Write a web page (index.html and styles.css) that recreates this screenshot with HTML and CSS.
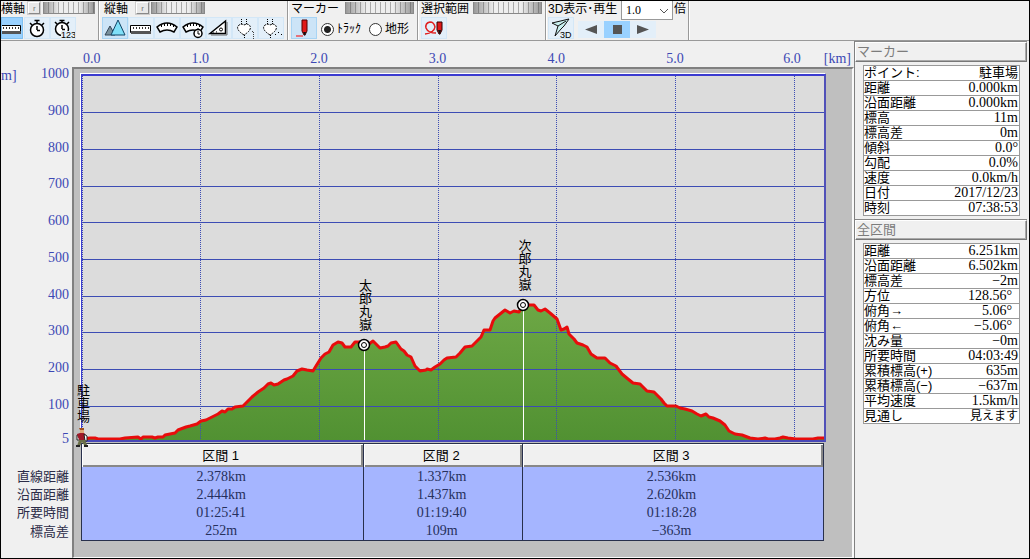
FILE: index.html
```html
<!DOCTYPE html>
<html lang="ja">
<head>
<meta charset="utf-8">
<title>断面図</title>
<link rel="stylesheet" href="styles.css">
</head>
<body>
<header class="toolbar">
  <section class="group group-x">
    <div class="group-head"><span>横軸</span><button class="reset" aria-label="横軸リセット">r</button><span class="dial"></span></div>
    <div class="tools">
      <button class="tool active" aria-label="距離"><svg width="20" height="22" viewBox="3 0 20 22"><path d="M1 7.500h20.500v7H1z" fill="#fff" stroke="#000"/><path d="M2 13h20v3H2z" fill="#555"/><path d="M4.500 9v2M7.500 9v2M10.500 9v2M13.500 9v2M16.500 9v2M19.500 9v2" stroke="#333"/></svg></button>
      <button class="tool" aria-label="時間"><svg width="24" height="22" viewBox="0 0 24 22"><circle cx="12" cy="12" r="6.500" fill="#fff" stroke="#000" stroke-width="1.500"/><path d="M12 5V3M9.500 2.500h5M12 12V8M12 12.500h3M5 5l2 2M19 5l-2 2" stroke="#000" fill="none" stroke-width="1.500"/></svg></button>
      <button class="tool" aria-label="時刻"><svg width="24" height="22" viewBox="0 0 24 22"><circle cx="11" cy="11" r="6.500" fill="#fff" stroke="#000" stroke-width="1.500"/><path d="M11 4V2M8.500 2.500h5M11 11V7M11 11.500h3M4 4l2 2M18 4l-2 2" stroke="#000" fill="none" stroke-width="1.500"/><path d="M10 13h14v9H10z" fill="#e3eff9"/><text class="icon-text" x="10" y="20">123</text></svg></button>
    </div>
  </section>
  <section class="group group-y">
    <div class="group-head"><span>縦軸</span><button class="reset" aria-label="縦軸リセット">r</button><span class="dial"></span></div>
    <div class="tools">
      <button class="tool on" aria-label="標高"><svg width="24" height="22" viewBox="0 0 24 22"><path d="M2 17L7 8l5 9z" fill="#78909c" stroke="#345"/><path d="M8 17L15 2l7 15z" fill="#80e0f8" stroke="#146"/></svg></button>
      <button class="tool" aria-label="沿面距離"><svg width="24" height="22" viewBox="0 0 24 22"><path d="M1.500 7.500h20v7h-20z" fill="#fff" stroke="#000"/><path d="M2 13h20v3H2z" fill="#555"/><path d="M4.500 9v2M7.500 9v2M10.500 9v2M13.500 9v2M16.500 9v2M19.500 9v2" stroke="#333"/></svg></button>
      <button class="tool" aria-label="速度"><svg width="24" height="22" viewBox="0 0 24 22"><path d="M2 9q10-8 20 0l-3 5q-7-4-14 0z" fill="#fff" stroke="#000" stroke-width="1.500"/><path d="M6.500 7v2M9.500 6v2M12.500 5v3M15.500 6v2M18.500 7v2" stroke="#000"/></svg></button>
      <button class="tool" aria-label="平均速度"><svg width="24" height="22" viewBox="0 0 24 22"><path d="M2 9q10-8 20 0l-3 5q-7-4-14 0z" fill="#fff" stroke="#000" stroke-width="1.500"/><path d="M6.500 7v2M9.500 6v2M12.500 5v3M15.500 6v2M18.500 7v2" stroke="#000"/><circle cx="17" cy="15.500" r="4" fill="#fff" stroke="#000" stroke-width="1.500"/><path d="M17 10v2M17 13v3h2" stroke="#000" fill="none"/></svg></button>
      <button class="tool" aria-label="傾斜"><svg width="24" height="22" viewBox="0 0 24 22"><path d="M3 15.500L18.500 3v12.500z" fill="#fff" stroke="#000" stroke-width="1.500"/><circle cx="14" cy="11.500" r="1.500" fill="none" stroke="#000"/><path d="M6.500 15v-2M9.500 15v-2M20 4v13H4" fill="none" stroke="#666"/></svg></button>
      <button class="tool" aria-label="センサー1"><svg width="24" height="22" viewBox="0 0 24 22"><path d="M11 17Q3 12 5 8q3-3 6-1 4-2 6 1 2 4-6 9z" fill="#fff" stroke="#000" stroke-dasharray="2 1"/><path d="M8.500 6V1M13.500 6V1M11.500 17v3" stroke="#000" stroke-dasharray="1 1"/><path d="M19 13.500h1.500V21" stroke="#444" fill="none" stroke-dasharray="1 1"/></svg></button>
      <button class="tool" aria-label="センサー2"><svg width="24" height="22" viewBox="0 0 24 22"><path d="M11 17Q3 12 5 8q3-3 6-1 4-2 6 1 2 4-6 9z" fill="#fff" stroke="#000" stroke-dasharray="2 1"/><path d="M8.500 6V1M13.500 6V1M11.500 17v3" stroke="#000" stroke-dasharray="1 1"/><path d="M16 16.500h1M19 14.500h1M22 16.500h1" stroke="#000"/></svg></button>
    </div>
  </section>
  <section class="group group-marker">
    <div class="group-head spread"><span>マーカー</span><span class="dial dial-wide"></span></div>
    <div class="tools">
      <button class="tool on" aria-label="マーカー"><svg width="24" height="22" viewBox="0 0 24 22"><path d="M10 2h5v11l-2 4h-1l-2-4z" fill="#e01818" stroke="#500"/><path d="M11 14h3l-1 4z" fill="#111"/><path d="M4 18h7" stroke="#f00"/></svg></button>
      <label class="choice"><input type="radio" name="target" checked>ﾄﾗｯｸ</label>
      <label class="choice"><input type="radio" name="target">地形</label>
    </div>
  </section>
  <section class="group group-range">
    <div class="group-head spread"><span>選択範囲</span><span class="dial dial-wide"></span></div>
    <div class="tools">
      <button class="tool" aria-label="範囲選択"><svg width="24" height="22" viewBox="0 0 24 22"><path d="M3 16q9-1 10-7-1-5-5-5-5 1-4 6 2 5 10 5" fill="none" stroke="#e02020" stroke-width="1.500"/><path d="M15 4h5v8l-2 4h-1l-2-4z" fill="#e01818" stroke="#300"/><path d="M16 12h3l-1 5z" fill="#111"/></svg></button>
    </div>
  </section>
  <section class="group group-play">
    <div class="group-head"><label for="rate">3D表示･再生</label><span class="rate-box"><select id="rate" class="rate"><option>1.0</option></select><svg class="chevron" width="10" height="6" viewBox="0 0 10 6"><path d="M1 1l4 4 4-4" fill="none" stroke="#555"/></svg></span><span>倍</span></div>
    <div class="tools">
      <button class="tool" aria-label="3D表示"><svg width="24" height="22" viewBox="0 0 24 22"><path d="M20 1L3 5l6 3-3 10 6-7 3-3z" fill="#c8f0f0" stroke="#111"/><path d="M9 8l8-5" stroke="#111"/><text class="icon-text" x="11" y="20">3D</text></svg></button>
      <span class="player">
        <button class="play" aria-label="逆再生"><svg width="24" height="17" viewBox="0 0 24 17"><path d="M6 8.500L18 4v9z" fill="#555"/></svg></button>
        <button class="play active" aria-label="停止"><svg width="24" height="17" viewBox="0 0 24 17"><path d="M8 4h9v9H8z" fill="#555"/></svg></button>
        <button class="play" aria-label="再生"><svg width="24" height="17" viewBox="0 0 24 17"><path d="M18 8.500L6 4v9z" fill="#555"/></svg></button>
      </span>
    </div>
  </section>
</header>
<div class="workspace">
  <main class="profile">
    <div class="x-axis"><span class="origin">0.0</span><span>1.0</span><span>2.0</span><span>3.0</span><span>4.0</span><span>5.0</span><span class="axis-end"><b>6.0</b><b>[km]</b></span></div>
    <div class="y-axis">
      <span class="unit">m]</span>
      <div class="y-ticks">
        <div class="hundreds"><span>1000</span><span>900</span><span>800</span><span>700</span><span>600</span><span>500</span><span>400</span><span>300</span><span>200</span><span>100</span></div>
        <span class="base">5</span>
      </div>
    </div>
    <div class="panel"></div>
    <div class="plot">
      <svg class="curve" viewBox="82 76 742 364" preserveAspectRatio="none" role="img" aria-label="標高グラフ">
        <defs><linearGradient id="hill" x1="0" y1="0" x2="0" y2="1"><stop offset="0" stop-color="#6da745"/><stop offset="1" stop-color="#519132"/></linearGradient></defs>
        <path id="ground" fill="url(#hill)"/>
        <g class="grid-h"><path d="M82 112.500h742M82 149.500h742M82 186.500h742M82 222.500h742M82 259.500h742M82 296.500h742M82 332.500h742M82 369.500h742M82 406.500h742"/></g>
        <g class="grid-v"><path d="M82.500 76v364M200.500 76v364M319.500 76v364M438.500 76v364M556.500 76v364M675.500 76v364M794.500 76v364"/></g>
        <path class="drop" d="M364.500 346v94M523.500 306v134"/>
        <path id="ridge" class="ridge"/>
      </svg>
      <div class="pin pin-start"><span class="pin-name">駐車場</span><svg width="14" height="20" viewBox="0 0 14 20"><path d="M5 1h4v4H5z" fill="#e0a878"/><path d="M4 0h5v2H5z" fill="#a05020"/><path d="M2 6l3-1h4l3 3v4h-2v1H4v-2L2 10z" fill="#a01828"/><path d="M9 6l3 2v5h-2zM2 7v5h2" fill="#fff" stroke="#222"/><path d="M4 12h6l2 5h-3l-2-3-2 4H2z" fill="#6b7048"/><path d="M1 17h4v2H1zM9 17h4v2H9z" fill="#222"/></svg></div>
      <div class="pin pin-taro"><span class="pin-name">太郎丸嶽</span><svg width="14" height="14" viewBox="0 0 14 14"><circle cx="7" cy="7" r="5.500" fill="#fff" stroke="#000" stroke-width="1.500"/><circle cx="7" cy="7" r="2.500" fill="#fff" stroke="#000"/></svg></div>
      <div class="pin pin-jiro"><span class="pin-name">次郎丸嶽</span><svg width="14" height="14" viewBox="0 0 14 14"><circle cx="7" cy="7" r="5.500" fill="#fff" stroke="#000" stroke-width="1.500"/><circle cx="7" cy="7" r="2.500" fill="#fff" stroke="#000"/></svg></div>
    </div>
    <table class="segments">
      <colgroup><col class="c-name"><col class="c-one"><col class="c-two"><col></colgroup>
      <thead><tr><td></td><th scope="col">区間 1</th><th scope="col">区間 2</th><th scope="col">区間 3</th></tr></thead>
      <tbody>
        <tr><th scope="row">直線距離</th><td>2.378km</td><td>1.337km</td><td>2.536km</td></tr>
        <tr><th scope="row">沿面距離</th><td>2.444km</td><td>1.437km</td><td>2.620km</td></tr>
        <tr><th scope="row">所要時間</th><td>01:25:41</td><td>01:19:40</td><td>01:18:28</td></tr>
        <tr><th scope="row">標高差</th><td>252m</td><td>109m</td><td>−363m</td></tr>
      </tbody>
    </table>
  </main>
  <aside class="side">
    <h2>マーカー</h2>
    <table class="facts">
      <tr><th scope="row">ポイント:</th><td class="kanji">駐車場</td></tr>
      <tr><th scope="row">距離</th><td>0.000km</td></tr>
      <tr><th scope="row">沿面距離</th><td>0.000km</td></tr>
      <tr><th scope="row">標高</th><td>11m</td></tr>
      <tr><th scope="row">標高差</th><td>0m</td></tr>
      <tr><th scope="row">傾斜</th><td>0.0°</td></tr>
      <tr><th scope="row">勾配</th><td>0.0%</td></tr>
      <tr><th scope="row">速度</th><td>0.0km/h</td></tr>
      <tr><th scope="row">日付</th><td>2017/12/23</td></tr>
      <tr><th scope="row">時刻</th><td>07:38:53</td></tr>
    </table>
    <h2>全区間</h2>
    <table class="facts">
      <tr><th scope="row">距離</th><td>6.251km</td></tr>
      <tr><th scope="row">沿面距離</th><td>6.502km</td></tr>
      <tr><th scope="row">標高差</th><td>−2m</td></tr>
      <tr><th scope="row">方位</th><td class="degree">128.56°</td></tr>
      <tr><th scope="row">俯角→</th><td class="degree">5.06°</td></tr>
      <tr><th scope="row">俯角←</th><td class="degree">−5.06°</td></tr>
      <tr><th scope="row">沈み量</th><td>−0m</td></tr>
      <tr><th scope="row">所要時間</th><td>04:03:49</td></tr>
      <tr><th scope="row">累積標高(+)</th><td>635m</td></tr>
      <tr><th scope="row">累積標高(−)</th><td>−637m</td></tr>
      <tr><th scope="row">平均速度</th><td>1.5km/h</td></tr>
      <tr><th scope="row">見通し</th><td class="kanji kana">見えます</td></tr>
    </table>
  </aside>
</div>
<script src="profile.js"></script>
</body>
</html>
```
FILE: styles.css
```css
* { box-sizing: border-box; }
body {
  margin: 0; min-height: 100vh; border: 1px solid #000; background: #f0f0f0; color: #000;
  display: flex; flex-direction: column; overflow: hidden;
  font: 13px/14px "Liberation Sans", "Noto Sans CJK JP", sans-serif;
}
button { margin: 0; padding: 0; border: 0; background: none; font: inherit; }
svg { display: block; flex: none; }

.toolbar { display: flex; height: 40px; border-bottom: 1px solid #999; font-size: 12px; }
.group { display: flex; flex-direction: column; flex: none; padding: 0 3px; border-right: 1px solid #999; box-shadow: 1px 0 #fff; }
.group-x { width: 98px; padding-left: 0; }
.group-y { width: 189px; }
.group-marker { width: 130px; }
.group-range { width: 128px; }
.group-play { width: 143px; padding: 0 2px; }
.group-head { display: flex; gap: 3px; height: 16px; padding-top: 1px; line-height: 15px; white-space: nowrap; }
.group-y .group-head { padding-left: 2px; gap: 8px; }
.group-y .dial { margin-left: -6px; }
.group-play .group-head { gap: 1px; }
.spread { justify-content: space-between; }
.group-play label { flex: 1; }
.reset { width: 13px; height: 12px; border: 1px solid; border-color: #fff #888 #888 #fff; background: #e8e8e8; color: #777; font-size: 8px; line-height: 9px; box-shadow: 0 0 0 1px #ccc; }
.dial {
  width: 54px; height: 12px; border: 1px solid #888; border-top: 0;
  background: linear-gradient(90deg, rgba(70,70,70,.5), rgba(255,255,255,0) 30%, rgba(255,255,255,0) 70%, rgba(70,70,70,.5)), repeating-linear-gradient(90deg, #eee 0 4px, #aaa 4px 5px);
}
.dial-wide { width: 69px; }
.tools { display: flex; height: 22px; align-items: center; }
.tool { width: 26px; height: 22px; border: 1px solid #d3e7f7; background: #e3eff9; }
.on { background: #cce4f7; border-color: #a8d4f4; }
.active { background: #99d1ff; border-color: #80c0f0; }
.group-x .active { width: 22px; margin-right: 1px; }
.icon-text { font: 9px "Liberation Sans", sans-serif; }
.choice { display: flex; align-items: center; gap: 3px; margin-left: 4px; padding-top: 2px; white-space: nowrap; }
.choice + .choice { margin-left: 8px; }
.choice input { appearance: none; width: 13px; height: 13px; margin: 0; border: 1px solid #333; border-radius: 50%; background: #fff; }
.choice input:checked { background: radial-gradient(circle, #222 0 3px, #fff 4px); }
.rate-box { position: relative; height: 18px; margin-top: -1px; }
.rate { display: block; appearance: none; width: 52px; height: 19px; margin: 0; padding: 0 0 0 4px; border: 1px solid #999; border-top: 0; border-radius: 0; background: #fff; font: 12px "Liberation Serif", serif; }
.chevron { position: absolute; right: 4px; top: 7px; pointer-events: none; }
.player { display: flex; margin: 3px 0 0 4px; }
.play { width: 26px; height: 17px; padding-left: 1px; background: #e3eff9; }
.play.active { background: #99d1ff; }

.workspace { flex: 1; display: flex; }
.profile { flex: 1; min-width: 0; display: grid; grid-template-columns: 71px 1fr; grid-template-rows: 26px 375px 1fr; }
.x-axis, .y-axis { color: #3c48b4; font: 14px/12px "Liberation Serif", serif; }
.x-axis { grid-area: 1 / 2; display: grid; grid-template-columns: 60fr repeat(5, 119fr) 117fr; padding: 12px 3px 0 9px; text-align: center; }
.origin { text-align: left; padding-left: 2px; }
.axis-end { display: flex; justify-content: space-between; padding-left: 49px; }
.axis-end b { font-weight: normal; }
.y-axis { grid-area: 2 / 1; display: flex; justify-content: space-between; padding: 1px 3px 0 0; text-align: right; }
.unit { padding-top: 2px; }
.hundreds { display: flex; flex-direction: column; justify-content: space-between; height: 343px; }
.base { display: block; margin-top: 22px; }
.panel { grid-area: 2 / 2 / 4 / 3; border: 2px solid #808080; border-right-color: #fafafa; border-bottom: 1px solid #fafafa; background: #bfbfbf; }
.plot { grid-area: 2 / 2; position: relative; z-index: 1; margin: 7px 28px 0 9px; border: 2px solid #3c3cd0; border-left-width: 1px; border-right-color: #5050b8; border-bottom-color: #4848b8; background: #dcdcdc; box-shadow: -1px -1px #fff; }
.curve { width: 100%; height: 100%; }
.curve path { vector-effect: non-scaling-stroke; }
.grid-h path, .grid-v path { fill: none; stroke: #3c4cb4; shape-rendering: crispEdges; }
.grid-v path { stroke-dasharray: 1 1; }
.drop { stroke: #fff; stroke-width: 1; shape-rendering: crispEdges; }
.ridge { fill: none; stroke: #e80c0c; stroke-width: 3; stroke-linejoin: round; }
.pin { position: absolute; display: flex; flex-direction: column; align-items: center; gap: 7px; width: 14px; margin-left: -7px; }
.pin-name { writing-mode: vertical-rl; line-height: 14px; }
.pin-start { left: 0; top: 308px; gap: 5px; }
.pin-taro { left: 38%; top: 203px; }
.pin-jiro { left: 59.5%; top: 163px; }

.segments { grid-area: 3 / 1 / 4 / 3; align-self: start; width: calc(100% - 30px); margin-top: 1px; border-spacing: 0; table-layout: fixed; text-align: center; line-height: 17px; }
.segments th { font-weight: normal; }
.segments th, .segments td { padding: 0; height: 18px; }
.c-name { width: 80px; }
.c-one { width: 34.3%; }
.c-two { width: 19.3%; }
.segments thead th { height: 24px; padding-right: 4px; border: 1px solid #28304c; border-width: 1px 0 0 1px; background: #f0f0f0; box-shadow: inset 1px 1px #fff, inset -2px -2px #888; }
.segments tbody th { padding-right: 12px; color: #2c2c48; text-align: right; }
.segments tbody td { padding-right: 3px; border-left: 1px solid #28304c; background: #a5b5ff; color: #26305c; font: 14px/17px "Liberation Serif", serif; }
.segments tr > :last-child { border-right: 1px solid #28304c; }
.segments tbody tr:last-child td { height: 20px; padding-bottom: 1px; border-bottom: 1px solid #28304c; }

.side { width: 175px; padding: 1px 2px 0 0; border-left: 1px solid #808080; }
.side h2 { margin: 0; height: 20px; padding: 2px 1px; border: 1px solid; border-color: #fff #777 #777 #fff; box-shadow: inset -1px -1px #aaa, 0 -1px #888; color: #7c7c7c; font-size: 13px; font-weight: normal; line-height: 14px; }
.facts { width: calc(100% - 15px); margin: 3px 7px 4px 8px; border-collapse: collapse; background: #fff; }
.facts tr { height: 15px; }
.facts th, .facts td { padding: 0 1px; border-bottom: 1px solid #999; border-top: 1px solid #999; line-height: 14px; white-space: nowrap; }
.facts th { padding: 0; border-left: 1px solid #999; font-weight: normal; text-align: left; }
.facts td { border-right: 1px solid #999; font: 14px/14px "Liberation Serif", serif; text-align: right; }
.facts .kanji { font: 13px/14px "Liberation Sans", "Noto Sans CJK JP", sans-serif; }
.facts .kana { font-size: 12px; }
.facts .degree { padding-right: 7px; }
```
FILE: profile.js
```js
const points = [
  [82,439],[90,438],[95,438],[98,439],[120,439],[125,438],[138,437],[141,439],[143,437],[152,437],[155,438],[158,437],[163,437],[165,435],[170,434],[175,433],[178,430],[186,427],[190,426],[197,424],[201,421],[206,420],[210,418],[214,416],[218,414],[222,411],[225,412],[228,409],[232,409],[235,407],[243,406],[247,402],[252,397],[258,392],[264,388],[268,384],[271,383],[274,385],[278,384],[284,380],[287,379],[293,376],[297,371],[302,369],[307,370],[313,371],[316,366],[321,358],[325,354],[329,352],[333,345],[338,342],[342,343],[345,347],[351,347],[355,342],[360,342],[364,346],[369,344],[373,341],[377,345],[380,348],[385,347],[388,346],[391,343],[396,342],[401,349],[404,351],[407,355],[411,357],[415,366],[420,371],[426,370],[427,369],[431,370],[435,367],[440,364],[444,360],[447,358],[456,357],[460,353],[465,347],[472,346],[478,340],[481,337],[484,330],[490,330],[493,321],[495,318],[500,314],[505,310],[510,313],[514,311],[519,312],[523,306],[530,305],[534,305],[538,310],[541,311],[545,309],[550,313],[557,319],[561,330],[564,329],[567,327],[569,334],[574,339],[577,343],[583,345],[587,347],[591,354],[597,358],[605,358],[610,363],[616,366],[622,374],[628,379],[633,383],[640,384],[647,391],[654,392],[658,396],[661,399],[664,403],[667,406],[676,406],[680,408],[685,409],[692,411],[697,414],[701,416],[706,414],[709,417],[713,418],[720,421],[725,425],[729,431],[735,434],[742,435],[750,438],[758,439],[765,438],[768,439],[775,439],[780,438],[783,437],[788,438],[796,439],[813,439],[818,438],[824,438]
];
const line = points.map((p) => p.join(" ")).join("L");
document.getElementById("ridge").setAttribute("d", "M" + line);
document.getElementById("ground").setAttribute("d", "M82 440L" + line + "L824 440z");
```
